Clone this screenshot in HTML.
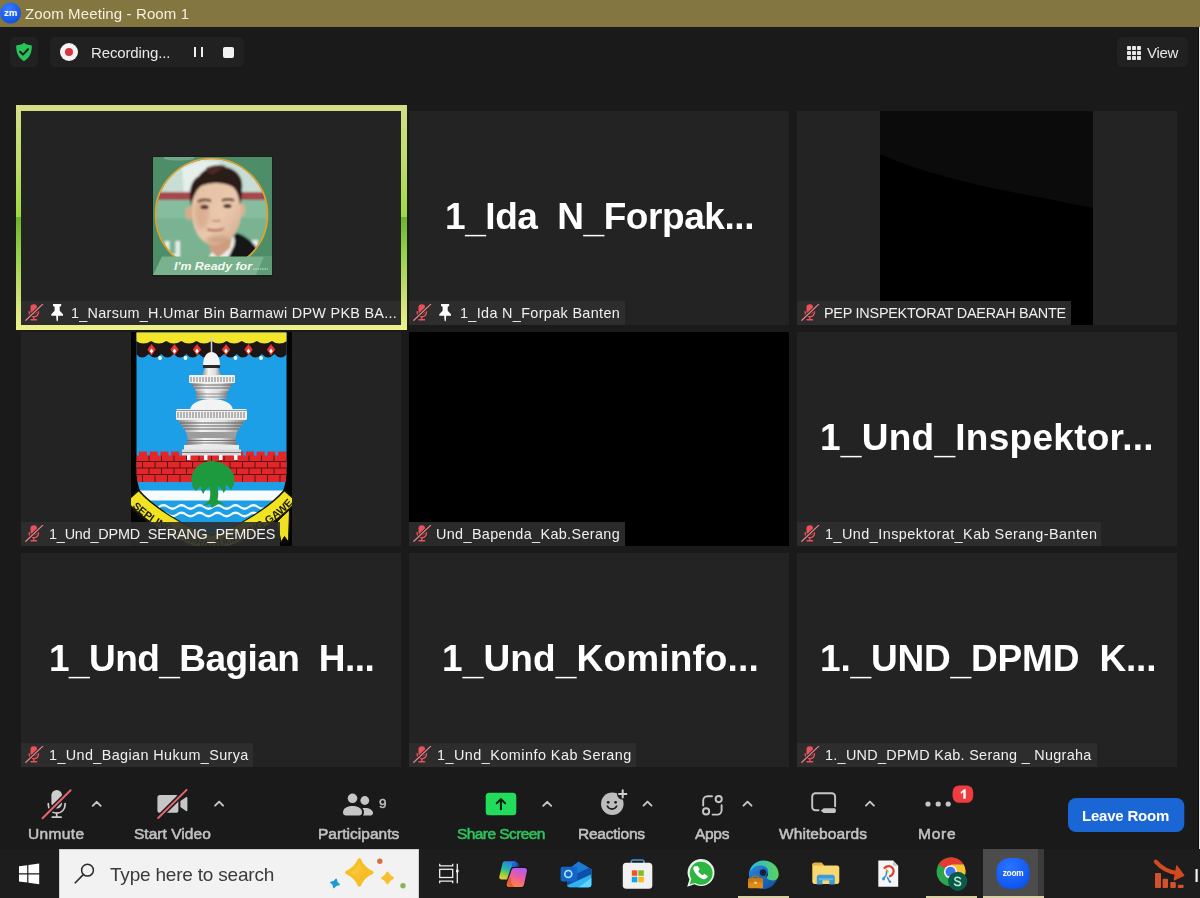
<!DOCTYPE html>
<html>
<head>
<meta charset="utf-8">
<title>Zoom Meeting - Room 1</title>
<style>
*{box-sizing:border-box;margin:0;padding:0}
html,body{width:1200px;height:898px;overflow:hidden;background:#1a1a1a}
body{position:relative;font-family:"Liberation Sans",sans-serif;color:#fff}
.abs{position:absolute}
.t{position:absolute;white-space:pre;line-height:1;will-change:transform}
#titlebar{left:0;top:0;width:1200px;height:27px;background:#837641}
.tile{position:absolute;width:380px;height:214px;background:#232323;overflow:hidden}
.big{font-weight:bold;font-size:37px;color:#fff}
.lab{position:absolute;left:0;top:189.5px;height:24.5px;background:rgba(46,46,46,.91)}
.lt{font-size:14.4px;color:#f0f0f0;top:5.5px}
.lab svg.m{position:absolute;left:3.5px;top:3.5px}
.lab svg.p{position:absolute;left:29.5px;top:3.5px}
.us{position:relative}
.big .us{top:3px}
.lt .us{top:1px}
.tb{font-size:15.5px;font-weight:normal;-webkit-text-stroke:0.55px currentColor;color:#c2c2c2;top:825.5px}
#taskbar{left:0;top:849px;width:1200px;height:49px;background:#1d1d1d}
</style>
</head>
<body>
<div id="titlebar" class="abs"></div>
<svg class="abs" style="left:0;top:2px" width="22" height="22" viewBox="0 0 22 22">
 <defs><radialGradient id="zg" cx="40%" cy="30%" r="75%"><stop offset="0" stop-color="#3b7bff"/><stop offset="1" stop-color="#0b4fe0"/></radialGradient></defs>
 <circle cx="10.5" cy="11" r="10.5" fill="url(#zg)"/>
 <text x="10.5" y="14" font-family="Liberation Sans" font-weight="bold" font-size="9.5" fill="#fff" text-anchor="middle">zm</text>
</svg>
<div class="t " id="title" style="left:25.40px;letter-spacing:0.117px;top:5.50px;font-size:15px;color:#f6f1dc">Zoom Meeting - Room 1</div>
<div class="abs" style="left:10px;top:37px;width:28px;height:30px;border-radius:6px;background:#212121"></div>
<svg class="abs" style="left:15px;top:42px" width="18" height="20" viewBox="0 0 18 20">
 <path d="M9 0.8 C11.5 2.6 14 3.2 16.8 3.4 C17 10 15 15.5 9 19.2 C3 15.5 1 10 1.2 3.4 C4 3.2 6.5 2.6 9 0.8Z" fill="#27c35b"/>
 <path d="M5.2 9.8 L8 12.6 L13 7.2" fill="none" stroke="#1a1a1a" stroke-width="2" stroke-linecap="round" stroke-linejoin="round"/>
</svg>
<div class="abs" style="left:50px;top:37px;width:194px;height:30px;border-radius:6px;background:#212121"></div>
<div class="abs" style="left:60px;top:43px;width:18px;height:18px;border-radius:50%;background:#f4f4f4"></div>
<div class="abs" style="left:65px;top:48px;width:8px;height:8px;border-radius:50%;background:#d9343f"></div>
<div class="t " id="rec" style="left:90.75px;letter-spacing:-0.138px;top:44.50px;font-size:15px;color:#e8e8e8">Recording...</div>
<div class="abs" style="left:194px;top:47px;width:2px;height:10px;background:#eee"></div>
<div class="abs" style="left:201px;top:47px;width:2px;height:10px;background:#eee"></div>
<div class="abs" style="left:223px;top:47px;width:11px;height:11px;border-radius:2px;background:#f2f2f2"></div>
<div class="abs" style="left:1117px;top:37px;width:71px;height:30px;border-radius:6px;background:#212121"></div>
<svg class="abs" style="left:1127px;top:46px" width="14" height="14" viewBox="0 0 14 14" fill="#e6e6e6">
 <rect x="0" y="0" width="4" height="4" rx=".8"/><rect x="5" y="0" width="4" height="4" rx=".8"/><rect x="10" y="0" width="4" height="4" rx=".8"/>
 <rect x="0" y="5" width="4" height="4" rx=".8"/><rect x="5" y="5" width="4" height="4" rx=".8"/><rect x="10" y="5" width="4" height="4" rx=".8"/>
 <rect x="0" y="10" width="4" height="4" rx=".8"/><rect x="5" y="10" width="4" height="4" rx=".8"/><rect x="10" y="10" width="4" height="4" rx=".8"/>
</svg>
<div class="t " id="view" style="left:1146.50px;letter-spacing:-0.300px;top:44.50px;font-size:15px;color:#e8e8e8">View</div>
<div class="abs" style="left:1199px;top:27px;width:1px;height:823px;background:#e8e8e8"></div>
<div class="abs" style="left:1198px;top:27px;width:1px;height:823px;background:#0c0c0c"></div>

<div class="abs" style="left:16px;top:105px;width:391px;height:225px;background:linear-gradient(180deg,#d4de88 0%,#bcdc66 28%,#9bdb3b 50%,#6cb42c 50%,#8fcf45 64%,#c8e070 84%,#eff18c 100%)"></div>
<div class="tile" style="left:21px;top:111px"><svg class="abs" style="left:131px;top:45px" width="121" height="121" viewBox="0 0 121 121">
 <defs>
  <clipPath id="pc"><circle cx="59.5" cy="58.5" r="55.5"/></clipPath>
  <clipPath id="pbx"><rect x="1" y="1" width="119" height="118"/></clipPath>
  <filter id="pb" x="-5%" y="-5%" width="110%" height="110%"><feGaussianBlur stdDeviation="0.9"/></filter>
  <filter id="pb3" x="-20%" y="-20%" width="140%" height="140%"><feGaussianBlur stdDeviation="2.2"/></filter>
  <linearGradient id="skin" x1="0" y1="0" x2="1" y2="1"><stop offset="0" stop-color="#e6c0a2"/><stop offset=".6" stop-color="#e9c8ad"/><stop offset="1" stop-color="#d5a98c"/></linearGradient>
 </defs>
 <rect x="0" y="0" width="121" height="121" fill="#1b1e1c"/>
 <rect x="1" y="1" width="119" height="118" fill="#4d8d68"/>
 <path d="M12 1h30v2c-10 2-22 2-30 0z" fill="#8fbfa5" opacity=".55"/>
 <g clip-path="url(#pbx)">
 <g clip-path="url(#pc)">
  <g filter="url(#pb)">
  <rect x="0" y="0" width="121" height="125" fill="#c8ddd5"/>
  <path d="M30 12l20-8 18 2-12 16-24 16z" fill="#e6efea"/>
  <rect x="0" y="36" width="121" height="8" fill="#a5474d"/>
  <rect x="0" y="44" width="121" height="80" fill="#86bd9f"/>
  <rect x="0" y="62" width="121" height="64" fill="#79b392"/>
  <path d="M13 85h4.5v13h6V85H28v22H13z" fill="#e6eee8"/>
  <path d="M100 84h6v11h-6z" fill="#e3ece6"/>
  <!-- suit & collar -->
  <path d="M38 112c4-5 9-8 15-9l12-8 20-18c10 3 19 12 24 22v20H38z" fill="#101114"/>
  <path d="M52 112c2-8 6-14 10-18l20-14c2 6 0 14-4 20l-8 12z" fill="#eeece8"/>
  <path d="M72 112c3-8 8-18 12-26l3-8c8 4 15 11 20 20l-10 14z" fill="#131418"/>
  <!-- neck -->
  <path d="M56 80h24l-2 12-12 10-8-8z" fill="#cf9e80"/>
  <!-- ears -->
  <ellipse cx="37" cy="57" rx="3.6" ry="7" fill="#d9ab8e"/>
  <ellipse cx="90" cy="54" rx="3.3" ry="6.5" fill="#dcb092"/>
  <!-- face -->
  <path d="M40 40c0-14 10-21 24-21s25 7 25 21v17c0 17-12 32-26 32S40 74 40 57z" fill="url(#skin)"/>
  <!-- hair -->
  <path d="M39 50c-3-15 0-26 8-30 5-8 15-11 26-9 12 2 19 11 17 23 0 6-1 11-2 15-1-9-3-14-7-18-9-5-23-5-32-1-5 4-8 11-10 20z" fill="#2a1a19"/>
  <path d="M54 12c6-3 14-4 20-2-4 2-8 6-12 8-5 0-8-2-8-6z" fill="#4b2a27"/>
  </g>
  <g filter="url(#pb3)">
   <ellipse cx="50" cy="58" rx="7" ry="16" fill="#c99676" opacity=".45"/>
   <ellipse cx="66" cy="84" rx="12" ry="4" fill="#b98566" opacity=".5"/>
  </g>
  <g filter="url(#pb)">
   <path d="M46 45.5c4-2 9-2 13-.5M70 44.5c4-1.5 8-1.5 12 0" stroke="#4a332c" stroke-width="2" fill="none" opacity=".85"/>
   <ellipse cx="52.5" cy="51" rx="3.8" ry="1.5" fill="#2e1f1c"/>
   <ellipse cx="75.5" cy="50" rx="3.8" ry="1.5" fill="#2e1f1c"/>
   <path d="M60 64c2 1.5 6 1.5 8.5 0" stroke="#b07a60" stroke-width="1.5" fill="none" opacity=".8"/>
   <path d="M56 73.5c4 1.5 11 1.5 15-.5" stroke="#a8625a" stroke-width="1.9" fill="none" stroke-linecap="round" opacity=".9"/>
  </g>
 </g>
 <circle cx="59.5" cy="58.5" r="56" fill="none" stroke="#dfa335" stroke-width="1.7"/>
 </g>
 <path d="M10 100.5h110l-7 18.5H1z" fill="#79b28c"/>
 <path d="M104 119l8-18.5h8V119z" fill="#5c9c77"/>
 <text x="22" y="113.5" font-family="Liberation Sans" font-weight="bold" font-style="italic" font-size="11" fill="#f4f8f4" textLength="78" lengthAdjust="spacingAndGlyphs">I'm Ready for</text>
 <path d="M101 113h15" stroke="#d4e6da" stroke-width="1" stroke-dasharray="1.5 .8"/>
</svg>
<div class="lab" style="width:380.0px"><svg class="m" width="19" height="17" viewBox="0 0 19 17"><rect x="5.5" y="0.2" width="6.6" height="10.2" rx="3.3" fill="#e9525b"/><path d="M4.1 7.6c0 3.2 2 5.1 4.7 5.1s4.7-1.9 4.7-5.1M8.8 12.7v2.6M6 15.7h5.6" fill="none" stroke="#e9525b" stroke-width="1.4" stroke-linecap="round"/><path d="M0.8 16.3L17.6 0.4" stroke="#2b2b2b" stroke-width="3.2"/><path d="M0.8 16.3L17.6 0.4" stroke="#e8868b" stroke-width="1.2" stroke-linecap="round"/></svg><svg class="p" width="13" height="18" viewBox="0 0 13 18"><path d="M2 0h8.2v1.9l-1.5 .8v4.1l3.3 3.4v1.6H7.2l-.3 4.5L6.2 17.8l-.7-1.5-.3-4.5H0.3v-1.6l3.3-3.4V2.7L2 1.9z" fill="#fff"/></svg><div class="t lt" id="l1" style="left:50.30px;letter-spacing:0.288px;">1<span class="us">_</span>Narsum<span class="us">_</span>H.Umar Bin Barmawi DPW PKB BA...</div></div></div>
<div class="tile" style="left:409px;top:111px"><div class="t big" id="b2" style="left:35.60px;letter-spacing:-0.427px;top:87.00px;">1<span class="us">_</span>Ida  N<span class="us">_</span>Forpak...</div><div class="lab" style="width:215.5px"><svg class="m" width="19" height="17" viewBox="0 0 19 17"><rect x="5.5" y="0.2" width="6.6" height="10.2" rx="3.3" fill="#e9525b"/><path d="M4.1 7.6c0 3.2 2 5.1 4.7 5.1s4.7-1.9 4.7-5.1M8.8 12.7v2.6M6 15.7h5.6" fill="none" stroke="#e9525b" stroke-width="1.4" stroke-linecap="round"/><path d="M0.8 16.3L17.6 0.4" stroke="#2b2b2b" stroke-width="3.2"/><path d="M0.8 16.3L17.6 0.4" stroke="#e8868b" stroke-width="1.2" stroke-linecap="round"/></svg><svg class="p" width="13" height="18" viewBox="0 0 13 18"><path d="M2 0h8.2v1.9l-1.5 .8v4.1l3.3 3.4v1.6H7.2l-.3 4.5L6.2 17.8l-.7-1.5-.3-4.5H0.3v-1.6l3.3-3.4V2.7L2 1.9z" fill="#fff"/></svg><div class="t lt" id="l2" style="left:50.50px;letter-spacing:0.344px;">1<span class="us">_</span>Ida N<span class="us">_</span>Forpak Banten</div></div></div>
<div class="tile" style="left:797px;top:111px"><svg class="abs" style="left:83px;top:0" width="213" height="214" viewBox="0 0 213 214"><rect width="213" height="214" fill="#000"/><path d="M0 0H213V97C140 82 60 70 0 43Z" fill="#0b0b0b"/></svg>
<div class="lab" style="width:274.0px"><svg class="m" width="19" height="17" viewBox="0 0 19 17"><rect x="5.5" y="0.2" width="6.6" height="10.2" rx="3.3" fill="#e9525b"/><path d="M4.1 7.6c0 3.2 2 5.1 4.7 5.1s4.7-1.9 4.7-5.1M8.8 12.7v2.6M6 15.7h5.6" fill="none" stroke="#e9525b" stroke-width="1.4" stroke-linecap="round"/><path d="M0.8 16.3L17.6 0.4" stroke="#2b2b2b" stroke-width="3.2"/><path d="M0.8 16.3L17.6 0.4" stroke="#e8868b" stroke-width="1.2" stroke-linecap="round"/></svg><div class="t lt" id="l3" style="left:27.00px;letter-spacing:-0.233px;">PEP INSPEKTORAT DAERAH BANTE</div></div></div>
<div class="tile" style="left:21px;top:332px"><svg class="abs" style="left:110px;top:0" width="161" height="214" viewBox="0 0 161 214">
<defs><clipPath id="sh"><path d="M5.5 0.5H155.5V138C155.5 178 120 205 80.5 226C41 205 5.5 178 5.5 138Z"/></clipPath><linearGradient id="tw" x1="0" y1="0" x2="1" y2="0"><stop offset="0" stop-color="#8d8d8d"/><stop offset=".35" stop-color="#f4f4f4"/><stop offset=".7" stop-color="#dcdcdc"/><stop offset="1" stop-color="#8a8a8a"/></linearGradient><filter id="cb" x="-2%" y="-2%" width="104%" height="104%"><feGaussianBlur stdDeviation="0.45"/></filter></defs>
<rect x="0" y="0" width="161" height="214" fill="#050505"/>
<g filter="url(#cb)">
<g clip-path="url(#sh)">
<rect x="0" y="0" width="163" height="230" fill="#1e9fe6"/>
<path d="M5 6H156V22Q149.7 29 143.4 22Q137.1 29 130.8 22Q124.5 29 118.2 22Q112 29 105.7 22Q99.4 29 93.1 22Q86.8 29 80.5 22Q74.2 29 67.9 22Q61.6 29 55.3 22Q49 29 42.8 22Q36.5 29 30.2 22Q23.9 29 17.6 22Q11.3 29 5 22Z" fill="#1a1412"/>
<path d="M5 0H156V9Q148.4 14 140.9 9Q133.3 14 125.8 9Q118.2 14 110.7 9Q103.2 14 95.6 9Q88 14 80.5 9Q73 14 65.4 9Q57.9 14 50.3 9Q42.8 14 35.2 9Q27.7 14 20.1 9Q12.6 14 5 9Z" fill="#f3e52a"/>
<path d="M20.5 12l4.2 5.5-4.2 6-4.2-6z" fill="#e8392e"/><path d="M20.5 16.5l1.8 2.5-1.8 2.5-1.8-2.5z" fill="#fff"/>
<path d="M43.5 12l4.2 5.5-4.2 6-4.2-6z" fill="#e8392e"/><path d="M43.5 16.5l1.8 2.5-1.8 2.5-1.8-2.5z" fill="#fff"/>
<path d="M66 12l4.2 5.5-4.2 6-4.2-6z" fill="#e8392e"/><path d="M66 16.5l1.8 2.5-1.8 2.5-1.8-2.5z" fill="#fff"/>
<path d="M95 12l4.2 5.5-4.2 6-4.2-6z" fill="#e8392e"/><path d="M95 16.5l1.8 2.5-1.8 2.5-1.8-2.5z" fill="#fff"/>
<path d="M117.5 12l4.2 5.5-4.2 6-4.2-6z" fill="#e8392e"/><path d="M117.5 16.5l1.8 2.5-1.8 2.5-1.8-2.5z" fill="#fff"/>
<path d="M140 12l4.2 5.5-4.2 6-4.2-6z" fill="#e8392e"/><path d="M140 16.5l1.8 2.5-1.8 2.5-1.8-2.5z" fill="#fff"/>
<circle cx="29" cy="26" r="1.9" fill="#fff"/>
<circle cx="54.5" cy="26" r="1.9" fill="#fff"/>
<circle cx="104.5" cy="26" r="1.9" fill="#fff"/>
<circle cx="130" cy="26" r="1.9" fill="#fff"/>
<rect x="0" y="123.5" width="163" height="26.5" fill="#e3262b"/>
<rect x="8" y="119.5" width="8" height="5" fill="#e3262b"/>
<rect x="18.7" y="119.5" width="8" height="5" fill="#e3262b"/>
<rect x="29.4" y="119.5" width="8" height="5" fill="#e3262b"/>
<rect x="40.1" y="119.5" width="8" height="5" fill="#e3262b"/>
<rect x="50.8" y="119.5" width="8" height="5" fill="#e3262b"/>
<rect x="61.5" y="119.5" width="8" height="5" fill="#e3262b"/>
<rect x="72.2" y="119.5" width="8" height="5" fill="#e3262b"/>
<rect x="82.9" y="119.5" width="8" height="5" fill="#e3262b"/>
<rect x="93.6" y="119.5" width="8" height="5" fill="#e3262b"/>
<rect x="104.3" y="119.5" width="8" height="5" fill="#e3262b"/>
<rect x="115" y="119.5" width="8" height="5" fill="#e3262b"/>
<rect x="125.7" y="119.5" width="8" height="5" fill="#e3262b"/>
<rect x="136.4" y="119.5" width="8" height="5" fill="#e3262b"/>
<rect x="147.1" y="119.5" width="8" height="5" fill="#e3262b"/>
<rect x="157.8" y="119.5" width="8" height="5" fill="#e3262b"/>
<path d="M0 129.5H163" stroke="#5a1414" stroke-width="1"/>
<path d="M0 136H163" stroke="#5a1414" stroke-width="1"/>
<path d="M0 142.5H163" stroke="#5a1414" stroke-width="1"/>
<path d="M5.5 123.5V129.5" stroke="#5a1414" stroke-width="1"/>
<path d="M18 123.5V129.5" stroke="#5a1414" stroke-width="1"/>
<path d="M30.5 123.5V129.5" stroke="#5a1414" stroke-width="1"/>
<path d="M43 123.5V129.5" stroke="#5a1414" stroke-width="1"/>
<path d="M55.5 123.5V129.5" stroke="#5a1414" stroke-width="1"/>
<path d="M68 123.5V129.5" stroke="#5a1414" stroke-width="1"/>
<path d="M80.5 123.5V129.5" stroke="#5a1414" stroke-width="1"/>
<path d="M93 123.5V129.5" stroke="#5a1414" stroke-width="1"/>
<path d="M105.5 123.5V129.5" stroke="#5a1414" stroke-width="1"/>
<path d="M118 123.5V129.5" stroke="#5a1414" stroke-width="1"/>
<path d="M130.5 123.5V129.5" stroke="#5a1414" stroke-width="1"/>
<path d="M143 123.5V129.5" stroke="#5a1414" stroke-width="1"/>
<path d="M155.5 123.5V129.5" stroke="#5a1414" stroke-width="1"/>
<path d="M11.5 129.5V136" stroke="#5a1414" stroke-width="1"/>
<path d="M24 129.5V136" stroke="#5a1414" stroke-width="1"/>
<path d="M36.5 129.5V136" stroke="#5a1414" stroke-width="1"/>
<path d="M49 129.5V136" stroke="#5a1414" stroke-width="1"/>
<path d="M61.5 129.5V136" stroke="#5a1414" stroke-width="1"/>
<path d="M74 129.5V136" stroke="#5a1414" stroke-width="1"/>
<path d="M86.5 129.5V136" stroke="#5a1414" stroke-width="1"/>
<path d="M99 129.5V136" stroke="#5a1414" stroke-width="1"/>
<path d="M111.5 129.5V136" stroke="#5a1414" stroke-width="1"/>
<path d="M124 129.5V136" stroke="#5a1414" stroke-width="1"/>
<path d="M136.5 129.5V136" stroke="#5a1414" stroke-width="1"/>
<path d="M149 129.5V136" stroke="#5a1414" stroke-width="1"/>
<path d="M5.5 136V142.5" stroke="#5a1414" stroke-width="1"/>
<path d="M18 136V142.5" stroke="#5a1414" stroke-width="1"/>
<path d="M30.5 136V142.5" stroke="#5a1414" stroke-width="1"/>
<path d="M43 136V142.5" stroke="#5a1414" stroke-width="1"/>
<path d="M55.5 136V142.5" stroke="#5a1414" stroke-width="1"/>
<path d="M68 136V142.5" stroke="#5a1414" stroke-width="1"/>
<path d="M80.5 136V142.5" stroke="#5a1414" stroke-width="1"/>
<path d="M93 136V142.5" stroke="#5a1414" stroke-width="1"/>
<path d="M105.5 136V142.5" stroke="#5a1414" stroke-width="1"/>
<path d="M118 136V142.5" stroke="#5a1414" stroke-width="1"/>
<path d="M130.5 136V142.5" stroke="#5a1414" stroke-width="1"/>
<path d="M143 136V142.5" stroke="#5a1414" stroke-width="1"/>
<path d="M155.5 136V142.5" stroke="#5a1414" stroke-width="1"/>
<path d="M11.5 142.5V150" stroke="#5a1414" stroke-width="1"/>
<path d="M24 142.5V150" stroke="#5a1414" stroke-width="1"/>
<path d="M36.5 142.5V150" stroke="#5a1414" stroke-width="1"/>
<path d="M49 142.5V150" stroke="#5a1414" stroke-width="1"/>
<path d="M61.5 142.5V150" stroke="#5a1414" stroke-width="1"/>
<path d="M74 142.5V150" stroke="#5a1414" stroke-width="1"/>
<path d="M86.5 142.5V150" stroke="#5a1414" stroke-width="1"/>
<path d="M99 142.5V150" stroke="#5a1414" stroke-width="1"/>
<path d="M111.5 142.5V150" stroke="#5a1414" stroke-width="1"/>
<path d="M124 142.5V150" stroke="#5a1414" stroke-width="1"/>
<path d="M136.5 142.5V150" stroke="#5a1414" stroke-width="1"/>
<path d="M149 142.5V150" stroke="#5a1414" stroke-width="1"/>
<rect x="0" y="158.5" width="163" height="10" fill="#f6fbff"/>
<path d="M10 175q4.5 -3.5 9 0q4.5 3.5 9 0q4.5 -3.5 9 0q4.5 3.5 9 0q4.5 -3.5 9 0q4.5 3.5 9 0q4.5 -3.5 9 0q4.5 3.5 9 0q4.5 -3.5 9 0q4.5 3.5 9 0q4.5 -3.5 9 0q4.5 3.5 9 0q4.5 -3.5 9 0q4.5 3.5 9 0q4.5 -3.5 9 0q4.5 3.5 9 0q4.5 -3.5 9 0" fill="none" stroke="#f6fbff" stroke-width="2.2"/>
<path d="M10 182.5q4.5 -3.5 9 0q4.5 3.5 9 0q4.5 -3.5 9 0q4.5 3.5 9 0q4.5 -3.5 9 0q4.5 3.5 9 0q4.5 -3.5 9 0q4.5 3.5 9 0q4.5 -3.5 9 0q4.5 3.5 9 0q4.5 -3.5 9 0q4.5 3.5 9 0q4.5 -3.5 9 0q4.5 3.5 9 0q4.5 -3.5 9 0q4.5 3.5 9 0q4.5 -3.5 9 0" fill="none" stroke="#f6fbff" stroke-width="2.2"/>
</g>
<path d="M80.5 6V22" stroke="#cfcfcf" stroke-width="1.6"/>
<path d="M72 34c0-9 3.5-14 8.5-14s8.5 5 8.5 14z" fill="#f4f4f4"/>
<rect x="72" y="33" width="17" height="3" fill="#2a2a2a"/>
<path d="M74 36h13l3 7H71z" fill="url(#tw)"/>
<rect x="58" y="43" width="46" height="8" rx="1" fill="#f2f2f2"/>
<path d="M60 45v5" stroke="#7a7a7a" stroke-width="1"/>
<path d="M63 45v5" stroke="#7a7a7a" stroke-width="1"/>
<path d="M66 45v5" stroke="#7a7a7a" stroke-width="1"/>
<path d="M69 45v5" stroke="#7a7a7a" stroke-width="1"/>
<path d="M72 45v5" stroke="#7a7a7a" stroke-width="1"/>
<path d="M75 45v5" stroke="#7a7a7a" stroke-width="1"/>
<path d="M78 45v5" stroke="#7a7a7a" stroke-width="1"/>
<path d="M81 45v5" stroke="#7a7a7a" stroke-width="1"/>
<path d="M84 45v5" stroke="#7a7a7a" stroke-width="1"/>
<path d="M87 45v5" stroke="#7a7a7a" stroke-width="1"/>
<path d="M90 45v5" stroke="#7a7a7a" stroke-width="1"/>
<path d="M93 45v5" stroke="#7a7a7a" stroke-width="1"/>
<path d="M96 45v5" stroke="#7a7a7a" stroke-width="1"/>
<path d="M99 45v5" stroke="#7a7a7a" stroke-width="1"/>
<path d="M102 45v5" stroke="#7a7a7a" stroke-width="1"/>
<path d="M60 51h42l-5 8H65z" fill="url(#tw)"/>
<path d="M61 53h40M63 56h36" stroke="#6a6a6a" stroke-width="1"/>
<rect x="65" y="59" width="31" height="8" fill="url(#tw)"/>
<path d="M65 62h31M65 65h31" stroke="#777" stroke-width=".8"/>
<path d="M59 78c1-7 9-11 21.5-11s20.5 4 21.5 11z" fill="#f3f3f3"/>
<rect x="45" y="77" width="71" height="11" rx="1.5" fill="#efefef"/>
<path d="M47 80v6" stroke="#777" stroke-width="1"/>
<path d="M50 80v6" stroke="#777" stroke-width="1"/>
<path d="M53 80v6" stroke="#777" stroke-width="1"/>
<path d="M56 80v6" stroke="#777" stroke-width="1"/>
<path d="M59 80v6" stroke="#777" stroke-width="1"/>
<path d="M62 80v6" stroke="#777" stroke-width="1"/>
<path d="M65 80v6" stroke="#777" stroke-width="1"/>
<path d="M68 80v6" stroke="#777" stroke-width="1"/>
<path d="M71 80v6" stroke="#777" stroke-width="1"/>
<path d="M74 80v6" stroke="#777" stroke-width="1"/>
<path d="M77 80v6" stroke="#777" stroke-width="1"/>
<path d="M80 80v6" stroke="#777" stroke-width="1"/>
<path d="M83 80v6" stroke="#777" stroke-width="1"/>
<path d="M86 80v6" stroke="#777" stroke-width="1"/>
<path d="M89 80v6" stroke="#777" stroke-width="1"/>
<path d="M92 80v6" stroke="#777" stroke-width="1"/>
<path d="M95 80v6" stroke="#777" stroke-width="1"/>
<path d="M98 80v6" stroke="#777" stroke-width="1"/>
<path d="M101 80v6" stroke="#777" stroke-width="1"/>
<path d="M104 80v6" stroke="#777" stroke-width="1"/>
<path d="M107 80v6" stroke="#777" stroke-width="1"/>
<path d="M110 80v6" stroke="#777" stroke-width="1"/>
<path d="M113 80v6" stroke="#777" stroke-width="1"/>
<path d="M45 78.5h71" stroke="#999" stroke-width="1"/>
<path d="M47 88h67l-8 12H55z" fill="url(#tw)"/>
<path d="M49 91h63M51 94h59M53 97h55" stroke="#5e5e5e" stroke-width="1.1"/>
<path d="M55 100h51l-2 7H57z" fill="#9c9c9c"/>
<rect x="56" y="106" width="49" height="7" fill="url(#tw)"/>
<path d="M56 108.5h49M56 111h49" stroke="#6a6a6a" stroke-width=".9"/>
<rect x="53" y="113" width="55" height="5" fill="#e9e9e9"/>
<rect x="51" y="117.5" width="59" height="6" fill="#d9d9d9"/>
<path d="M51 120.5h59" stroke="#777" stroke-width="1"/>
<rect x="56" y="123" width="3.5" height="5" fill="#fafafa"/>
<rect x="73" y="123" width="3.5" height="5" fill="#fafafa"/>
<rect x="88" y="123" width="3.5" height="5" fill="#fafafa"/>
<rect x="103" y="123" width="3.5" height="5" fill="#fafafa"/>
<path d="M80.5 129c13 0 23 9 23 19 0 4-2 8-4 10-1-3-3-5-5-5 1 3 0 6-2 8-1-3-3-6-6-7 1 5 1 10 0 14l8 5-7-1-7 4-1-4-8 2 7-6c1-4 1-9 0-13-3 1-5 3-6 7-2-2-3-5-2-8-3 1-4 3-5 5-3-2-5-6-5-11 0-10 8-19 20-19z" fill="#1f9a3c"/>
<path d="M146 190L158.5 177L157.5 210L153.5 204.5L150 210Z" fill="#efe023" stroke="#16140a" stroke-width="1"/>
<path d="M1 163.5C15 180 48 203 80.5 213C113 203 146 180 160 163.5" fill="none" stroke="#16140a" stroke-width="18.5"/>
<path d="M2 164.5C16 180 48 202 80.5 212C113 202 145 180 159 164.5" fill="none" stroke="#f1e224" stroke-width="15"/>
<path id="rb" d="M-1 172.5C13 188 46 208 80.5 217.5C115 208 148 188 162 171" fill="none"/>
<text font-family="Liberation Sans" font-size="10.5" font-weight="bold" fill="#1a1a10"><textPath href="#rb" startOffset="3" textLength="186" lengthAdjust="spacingAndGlyphs">SEPI ING PAMRIH RAME ING GAWE</textPath></text>
</g>
</svg><div class="lab" style="width:258.5px"><svg class="m" width="19" height="17" viewBox="0 0 19 17"><rect x="5.5" y="0.2" width="6.6" height="10.2" rx="3.3" fill="#e9525b"/><path d="M4.1 7.6c0 3.2 2 5.1 4.7 5.1s4.7-1.9 4.7-5.1M8.8 12.7v2.6M6 15.7h5.6" fill="none" stroke="#e9525b" stroke-width="1.4" stroke-linecap="round"/><path d="M0.8 16.3L17.6 0.4" stroke="#2b2b2b" stroke-width="3.2"/><path d="M0.8 16.3L17.6 0.4" stroke="#e8868b" stroke-width="1.2" stroke-linecap="round"/></svg><div class="t lt" id="l4" style="left:28.00px;letter-spacing:-0.176px;">1<span class="us">_</span>Und<span class="us">_</span>DPMD<span class="us">_</span>SERANG<span class="us">_</span>PEMDES</div></div></div>
<div class="tile" style="left:409px;top:332px;background:#000"><div class="lab" style="width:216.0px"><svg class="m" width="19" height="17" viewBox="0 0 19 17"><rect x="5.5" y="0.2" width="6.6" height="10.2" rx="3.3" fill="#e9525b"/><path d="M4.1 7.6c0 3.2 2 5.1 4.7 5.1s4.7-1.9 4.7-5.1M8.8 12.7v2.6M6 15.7h5.6" fill="none" stroke="#e9525b" stroke-width="1.4" stroke-linecap="round"/><path d="M0.8 16.3L17.6 0.4" stroke="#2b2b2b" stroke-width="3.2"/><path d="M0.8 16.3L17.6 0.4" stroke="#e8868b" stroke-width="1.2" stroke-linecap="round"/></svg><div class="t lt" id="l5" style="left:27.00px;letter-spacing:0.364px;">Und<span class="us">_</span>Bapenda<span class="us">_</span>Kab.Serang</div></div></div>
<div class="tile" style="left:797px;top:332px"><div class="t big" id="b6" style="left:23.40px;letter-spacing:0.268px;top:87.00px;">1<span class="us">_</span>Und<span class="us">_</span>Inspektor...</div><div class="lab" style="width:304.0px"><svg class="m" width="19" height="17" viewBox="0 0 19 17"><rect x="5.5" y="0.2" width="6.6" height="10.2" rx="3.3" fill="#e9525b"/><path d="M4.1 7.6c0 3.2 2 5.1 4.7 5.1s4.7-1.9 4.7-5.1M8.8 12.7v2.6M6 15.7h5.6" fill="none" stroke="#e9525b" stroke-width="1.4" stroke-linecap="round"/><path d="M0.8 16.3L17.6 0.4" stroke="#2b2b2b" stroke-width="3.2"/><path d="M0.8 16.3L17.6 0.4" stroke="#e8868b" stroke-width="1.2" stroke-linecap="round"/></svg><div class="t lt" id="l6" style="left:27.50px;letter-spacing:0.468px;">1<span class="us">_</span>Und<span class="us">_</span>Inspektorat<span class="us">_</span>Kab Serang-Banten</div></div></div>
<div class="tile" style="left:21px;top:553px"><div class="t big" id="b7" style="left:28.00px;letter-spacing:-0.558px;top:87.00px;">1<span class="us">_</span>Und<span class="us">_</span>Bagian  H...</div><div class="lab" style="width:232.0px"><svg class="m" width="19" height="17" viewBox="0 0 19 17"><rect x="5.5" y="0.2" width="6.6" height="10.2" rx="3.3" fill="#e9525b"/><path d="M4.1 7.6c0 3.2 2 5.1 4.7 5.1s4.7-1.9 4.7-5.1M8.8 12.7v2.6M6 15.7h5.6" fill="none" stroke="#e9525b" stroke-width="1.4" stroke-linecap="round"/><path d="M0.8 16.3L17.6 0.4" stroke="#2b2b2b" stroke-width="3.2"/><path d="M0.8 16.3L17.6 0.4" stroke="#e8868b" stroke-width="1.2" stroke-linecap="round"/></svg><div class="t lt" id="l7" style="left:27.50px;letter-spacing:0.387px;">1<span class="us">_</span>Und<span class="us">_</span>Bagian Hukum<span class="us">_</span>Surya</div></div></div>
<div class="tile" style="left:409px;top:553px"><div class="t big" id="b8" style="left:32.60px;letter-spacing:0.144px;top:87.00px;">1<span class="us">_</span>Und<span class="us">_</span>Kominfo...</div><div class="lab" style="width:226.7px"><svg class="m" width="19" height="17" viewBox="0 0 19 17"><rect x="5.5" y="0.2" width="6.6" height="10.2" rx="3.3" fill="#e9525b"/><path d="M4.1 7.6c0 3.2 2 5.1 4.7 5.1s4.7-1.9 4.7-5.1M8.8 12.7v2.6M6 15.7h5.6" fill="none" stroke="#e9525b" stroke-width="1.4" stroke-linecap="round"/><path d="M0.8 16.3L17.6 0.4" stroke="#2b2b2b" stroke-width="3.2"/><path d="M0.8 16.3L17.6 0.4" stroke="#e8868b" stroke-width="1.2" stroke-linecap="round"/></svg><div class="t lt" id="l8" style="left:27.50px;letter-spacing:0.474px;">1<span class="us">_</span>Und<span class="us">_</span>Kominfo Kab Serang</div></div></div>
<div class="tile" style="left:797px;top:553px"><div class="t big" id="b9" style="left:22.60px;letter-spacing:-0.172px;top:87.00px;">1.<span class="us">_</span>UND<span class="us">_</span>DPMD  K...</div><div class="lab" style="width:300.0px"><svg class="m" width="19" height="17" viewBox="0 0 19 17"><rect x="5.5" y="0.2" width="6.6" height="10.2" rx="3.3" fill="#e9525b"/><path d="M4.1 7.6c0 3.2 2 5.1 4.7 5.1s4.7-1.9 4.7-5.1M8.8 12.7v2.6M6 15.7h5.6" fill="none" stroke="#e9525b" stroke-width="1.4" stroke-linecap="round"/><path d="M0.8 16.3L17.6 0.4" stroke="#2b2b2b" stroke-width="3.2"/><path d="M0.8 16.3L17.6 0.4" stroke="#e8868b" stroke-width="1.2" stroke-linecap="round"/></svg><div class="t lt" id="l9" style="left:27.50px;letter-spacing:0.295px;">1.<span class="us">_</span>UND<span class="us">_</span>DPMD Kab. Serang <span class="us">_</span> Nugraha</div></div></div>
<svg class="abs" style="left:0;top:780px" width="1200" height="70" viewBox="0 780 1200 70">
 <g fill="#c6c6c6" stroke="none">
  <rect x="51.4" y="790" width="10.6" height="18.6" rx="5.3" fill="#cdcdcd"/>
  <path d="M48.3 803.5v1.3a8.4 8.4 0 0 0 16.8 0v-1.3" fill="none" stroke="#cdcdcd" stroke-width="1.7" stroke-linecap="round"/>
  <path d="M56.7 813v4M52.3 817.2h8.8" fill="none" stroke="#cdcdcd" stroke-width="1.7" stroke-linecap="round"/>
  <path d="M42.5 818.2L70.6 790.2" stroke="#1a1a1a" stroke-width="5"/>
  <path d="M42.5 818.2L70.6 790.2" stroke="#e8626c" stroke-width="2" stroke-linecap="round"/>
  <rect x="157.4" y="795.1" width="21" height="17.7" rx="2.6"/>
  <path d="M180.4 801.1l5.6-3.9c.7-.4 1.4-.1 1.4.7v12.4c0 .8-.7 1.1-1.4.7l-5.6-3.9z"/>
  <path d="M158.2 818L186.6 789.9" stroke="#1a1a1a" stroke-width="5"/>
  <path d="M158.2 818L186.6 789.9" stroke="#e8626c" stroke-width="2" stroke-linecap="round"/>
  <circle cx="352.5" cy="798.3" r="4.8"/>
  <path d="M343 812.3c0-4 4-6.3 9.5-6.3s9.5 2.3 9.5 6.3c0 2.2-1.2 3.2-3 3.2h-13c-1.8 0-3-1-3-3.2z"/>
  <circle cx="364.8" cy="800.5" r="4.4"/>
  <path d="M362.4 808.2c.8-.2 1.6-.3 2.5-.3 4.7 0 8.1 2 8.1 5.2 0 1.7-.9 2.4-2.4 2.4h-7.6c.7-.8 1-1.9 1-3.2 0-1.6-.6-3-1.6-4.1z"/>
  <rect x="485.7" y="792.7" width="30.6" height="22.6" rx="3.5" fill="#23dc5b"/>
  <path d="M500.9 809.3v-9.5M496.7 803.3l4.2-4.2 4.2 4.2" fill="none" stroke="#0a1a0e" stroke-width="2" stroke-linecap="round" stroke-linejoin="round"/>
  <circle cx="612.3" cy="803.8" r="11.3" fill="#bdbdbd"/>
  <circle cx="622.7" cy="793.9" r="5.7" fill="#1a1a1a"/>
  <path d="M622.7 790.2v7.4M619 793.9h7.4" stroke="#d0d0d0" stroke-width="2" stroke-linecap="round"/>
  <circle cx="608.2" cy="802.3" r="1.35" fill="#1a1a1a"/><circle cx="615.6" cy="802.3" r="1.35" fill="#1a1a1a"/>
  <path d="M607.3 806.2c1.2 2 2.8 2.9 4.7 2.9s3.5-.9 4.7-2.9" fill="none" stroke="#1a1a1a" stroke-width="1.6" stroke-linecap="round"/>
  <g fill="none" stroke="#c6c6c6" stroke-width="1.9" stroke-linecap="round">
   <path d="M703.2 805.5v-5a4.3 4.3 0 0 1 4.3-4.3h4.5"/>
   <path d="M721.6 805.3v5a4.3 4.3 0 0 1-4.3 4.3h-4.7"/>
   <circle cx="718.7" cy="799.1" r="3.1"/>
   <circle cx="706.1" cy="811.4" r="3.1"/>
  </g>
  <path d="M818.5 810.3h-3a3.3 3.3 0 0 1-3.3-3.3v-10.4a3.3 3.3 0 0 1 3.3-3.3h16.3a3.3 3.3 0 0 1 3.3 3.3v9.7" fill="none" stroke="#c6c6c6" stroke-width="1.9" stroke-linecap="round"/>
  <path d="M820.7 810.7l3-2.4h10.6c.9 0 1.5.6 1.5 1.5v1.8c0 .9-.6 1.5-1.5 1.5h-10.6z"/>
  <circle cx="928" cy="804" r="2.6"/><circle cx="938.2" cy="804" r="2.6"/><circle cx="948.2" cy="804" r="2.6"/>
  <rect x="952.6" y="785.4" width="20.6" height="17.4" rx="6.5" fill="#ee3c41"/>
  <path d="M960.8 791.9l3.2-2.7h1.7v9.6h-2.4v-6.6l-2.5 1.7z" fill="#fff"/>
  <rect x="1068" y="798" width="116.3" height="34" rx="8" fill="#1a66d4"/>
 </g>
 <g fill="none" stroke="#c8c8c8" stroke-width="1.9" stroke-linecap="round" stroke-linejoin="round">
  <path d="M92.7 805.8l4-4 4 4"/><path d="M215.1 805.6l4-4 4 4"/><path d="M543.2 805.8l4-4 4 4"/>
  <path d="M643.5 805.6l4-4 4 4"/><path d="M743.5 805.7l4-4 4 4"/><path d="M865.9 805.6l4-4 4 4"/>
 </g>
</svg>
<div class="t tb" id="u1" style="left:28.00px;letter-spacing:0.360px;">Unmute</div><div class="t tb" id="u2" style="left:134.00px;letter-spacing:0.036px;">Start Video</div><div class="t tb" id="u3" style="left:317.60px;letter-spacing:0.030px;">Participants</div><div class="t tb" id="u4" style="left:457.00px;letter-spacing:-0.573px;color:#2fc45e">Share Screen</div><div class="t tb" id="u5" style="left:578.40px;letter-spacing:-0.227px;">Reactions</div><div class="t tb" id="u6" style="left:695.40px;letter-spacing:-0.300px;">Apps</div><div class="t tb" id="u7" style="left:779.00px;letter-spacing:0.090px;">Whiteboards</div><div class="t tb" id="u8" style="left:918.40px;letter-spacing:0.780px;">More</div><div class="t " id="u9" style="left:1082.40px;letter-spacing:-0.220px;top:808.00px;font-size:15px;font-weight:bold;color:#fff">Leave Room</div><div class="t " id="n9" style="left:379.25px;letter-spacing:0.000px;top:796.50px;font-size:13.5px;-webkit-text-stroke:.4px currentColor;color:#c4c4c4">9</div>
<div id="taskbar" class="abs"></div>
<div class="abs" style="left:59px;top:849px;width:360px;height:49px;background:#f2f2f2;border:1px solid #cfcfcf;border-bottom:0"></div>
<div class="abs" style="left:983px;top:849px;width:55px;height:49px;background:#4c4c4c"></div>
<div class="abs" style="left:1038px;top:849px;width:5.5px;height:49px;background:#3b3b3b"></div>
<div class="abs" style="left:738px;top:896px;width:51px;height:2px;background:#d8cfa4"></div>
<div class="abs" style="left:925.5px;top:896px;width:51px;height:2px;background:#d8cfa4"></div>
<div class="abs" style="left:983px;top:896px;width:60.5px;height:2px;background:#d8cfa4"></div>
<div class="t " id="srch" style="left:110.00px;letter-spacing:-0.200px;top:865.00px;font-size:19px;color:#3a3a3a">Type here to search</div>
<svg class="abs" style="left:0;top:849px" width="1200" height="49" viewBox="0 849 1200 49">
 <defs>
  <linearGradient id="gy" x1="0" y1="0" x2="1" y2="1"><stop offset="0" stop-color="#ffd84a"/><stop offset="1" stop-color="#f2a91e"/></linearGradient>
  <linearGradient id="cpl" gradientUnits="userSpaceOnUse" x1="510" y1="861" x2="504" y2="880"><stop offset="0" stop-color="#2a7df0"/><stop offset=".45" stop-color="#25b9a0"/><stop offset=".75" stop-color="#9bd13c"/><stop offset="1" stop-color="#f6c83a"/></linearGradient>
  <linearGradient id="cpr" gradientUnits="userSpaceOnUse" x1="521" y1="868" x2="514" y2="887"><stop offset="0" stop-color="#b15cf0"/><stop offset=".5" stop-color="#ee5c9c"/><stop offset="1" stop-color="#fb8a3c"/></linearGradient>
  <linearGradient id="edg" x1="0" y1="0" x2="1" y2="0"><stop offset="0" stop-color="#2bb5e8"/><stop offset="1" stop-color="#58d35a"/></linearGradient>
  <linearGradient id="edb" x1="0" y1="0" x2="1" y2="1"><stop offset="0" stop-color="#2a86dc"/><stop offset="1" stop-color="#0d4fa0"/></linearGradient>
  <radialGradient id="zmg" cx="40%" cy="30%" r="80%"><stop offset="0" stop-color="#2a74ff"/><stop offset="1" stop-color="#0a50ee"/></radialGradient>
 </defs>
 <!-- windows logo -->
 <path d="M19 866.3l8.2-1.15v8.1H19zM28.4 865l10.8-1.5v9.75H28.4zM19 874.4h8.2v8.1L19 881.4zM28.4 874.4h10.8v9.8l-10.8-1.5z" fill="#fff"/>
 <!-- magnifier -->
 <circle cx="87.5" cy="870.2" r="5.9" fill="none" stroke="#2b2b2b" stroke-width="1.5"/>
 <path d="M83.3 874.6L74.8 883.2" stroke="#2b2b2b" stroke-width="1.6"/>
 <!-- sparkles -->
 <path d="M359.3 859.9Q363.1 868.7 371.9 872.5Q363.1 876.3 359.3 885.1Q355.5 876.3 346.7 872.5Q355.5 868.7 359.3 859.9Z" fill="url(#gy)" stroke="#f6c022" stroke-width="3.4" stroke-linejoin="round"/>
 <path d="M387.5 872.7Q389.1 876.4 392.8 878Q389.1 879.6 387.5 883.3Q385.9 879.6 382.2 878Q385.9 876.4 387.5 872.7Z" fill="#f7c02c" stroke="#f7c02c" stroke-width="2.2" stroke-linejoin="round"/>
 <path d="M335 879.2Q335.9 882.5 339.2 883.4Q335.9 884.3 335 887.6Q334.1 884.3 330.8 883.4Q334.1 882.5 335 879.2Z" fill="#1e9ad6" stroke="#1e9ad6" stroke-width="1.6" stroke-linejoin="round" transform="rotate(15 335 883.4)"/>
 <circle cx="379.8" cy="861.3" r="2.7" fill="#d9703c"/>
 <circle cx="403" cy="885.8" r="2.7" fill="#8db356"/>
 <!-- task view -->
 <g fill="none" stroke="#f0f0f0" stroke-width="1.3">
  <rect x="439.7" y="869.3" width="13" height="8.2"/>
  <path d="M439.7 863.8v2h13v-2M439.7 883.3v-2.2h13v2.2M457.3 863.8v19.5"/>
 </g>
 <rect x="456" y="869.7" width="2.6" height="2.6" fill="#f0f0f0"/>
 <!-- copilot -->
 <path d="M505 863.7h9.2l-4.2 13.3h-8.2z" fill="url(#cpl)" stroke="url(#cpl)" stroke-width="5" stroke-linejoin="round"/>
 <path d="M512.5 862.5l3.5-.5 2.5 1.5.3 3-1.5 5h-6.5z" fill="#1d55d6" opacity=".75"/>
 <path d="M514 870.5h10.5l-3 13.9h-12.3z" fill="#17181c" stroke="#17181c" stroke-width="7.4" stroke-linejoin="round"/>
 <path d="M514 870.5h10.5l-3 13.9h-12.3z" fill="url(#cpr)" stroke="url(#cpr)" stroke-width="5" stroke-linejoin="round"/>
 <path d="M507 882l3.5-5 1 6.5 3 3.4h-4.5c-2-.5-3.3-2.4-3-4.9z" fill="#e4522c" opacity=".8"/>
 <!-- outlook -->
 <defs><clipPath id="olc"><path d="M567 870.5l11.5-9L591.3 869v15.7c0 1.4-1.1 2.5-2.5 2.5h-19.3c-1.4 0-2.5-1.1-2.5-2.5z"/></clipPath></defs>
 <g clip-path="url(#olc)">
  <rect x="560" y="858" width="34" height="32" fill="#1b7ad6"/>
  <path d="M565 881.5l27-13v21h-27z" fill="#31b2f0"/>
  <path d="M565 879l27-12.5v7.5l-27 12.5z" fill="#0e50a8"/>
  <path d="M577 888.5l15-11v11z" fill="#5ad6ff"/>
 </g>
 <rect x="560.6" y="866.8" width="16.6" height="14.6" rx="2" fill="#1466c6"/>
 <circle cx="568.3" cy="874" r="3.5" fill="none" stroke="#b2e6ff" stroke-width="1.6"/>
 <!-- store -->
 <path d="M631.3 863.5v-1.5a2 2 0 0 1 2-2h8.7a2 2 0 0 1 2 2v1.5" fill="none" stroke="#3d9ad8" stroke-width="1.6"/>
 <rect x="622.8" y="862.8" width="29.5" height="26" rx="3.5" fill="#f1f1f1"/>
 <rect x="631.8" y="870.3" width="5.5" height="5.5" fill="#f0552a"/><rect x="638.3" y="870.3" width="5.5" height="5.5" fill="#80bb2a"/>
 <rect x="631.8" y="876.8" width="5.5" height="5.5" fill="#1aa3e8"/><rect x="638.3" y="876.8" width="5.5" height="5.5" fill="#fbb912"/>
 <!-- whatsapp -->
 <path d="M687.2 886.8l2.2-7.4a13.5 13.5 0 1 1 5 4.9z" fill="#e9f7ea"/>
 <path d="M689.8 884.3l1.5-5.2a11.5 11.5 0 1 1 3.9 3.9z" fill="#2db742"/>
 <path d="M696.3 866.3c.5-.5 1.2-.5 1.6 0l1.5 2.3c.3.5.2 1-.2 1.4l-.9.9c.9 2 2.4 3.5 4.4 4.4l.9-.9c.4-.4.9-.5 1.4-.2l2.3 1.5c.5.4.5 1.1 0 1.6l-1 1c-1 1-2.5 1.2-3.8.7-4-1.6-7.3-4.9-8.9-8.9-.5-1.3-.3-2.8.7-3.8z" fill="#fff"/>
 <!-- edge -->
 <path d="M749 876c-.6-8.5 6-15.5 14.5-15.5 9 0 15.2 6.5 15.2 13.8 0 4.5-3.4 7.5-7.3 7.5-3.2 0-5-1.7-5-3.3 0-.8.3-1.3.8-1.9.6-.8.9-1.8.9-2.8 0-3-2.5-5.2-5.8-5.2-5.2 0-9.8 3.6-13.3 7.4z" fill="url(#edg)"/>
 <path d="M749 876c0-5.5 5-10.4 11.6-10.4 4.5 0 7.5 2.6 7.5 5.8 0 1.4-.5 2.4-1.1 3.2-.4.6-.6 1-.6 1.7 0 2 2.4 4.2 6 4.2 1.7 0 3.2-.5 4.6-1.3-2.2 6-7.7 9.8-13.8 9.8C755.2 889 749 883 749 876z" fill="url(#edb)"/>
 <ellipse cx="763" cy="872.6" rx="3.3" ry="3.4" fill="#15233c"/>
 <path d="M752.3 878.5v-1.3c0-.6.5-1.1 1.1-1.1h4.2c.6 0 1.1.5 1.1 1.1v1.3" fill="none" stroke="#b86c10" stroke-width="1.2"/>
 <rect x="748" y="878.4" width="15" height="9.9" rx="1" fill="#dc8b1c"/>
 <rect x="748" y="878.4" width="15" height="4.2" rx="1" fill="#c97a14"/>
 <rect x="754.3" y="881.7" width="2.5" height="1.9" fill="#ffe08a"/>
 <!-- explorer -->
 <path d="M812.3 865c0-1.2.9-2.2 2.2-2.2h7.2l2.4 2.7h13c1.2 0 2.2 1 2.2 2.2v14c0 1.2-1 2.2-2.2 2.2h-22.6c-1.2 0-2.2-1-2.2-2.2z" fill="#f9d872"/>
 <path d="M812.3 865c0-1.2.9-2.2 2.2-2.2h7.2l2.4 2.7h-9.5c-1.3 0-2.3 1-2.3 2.2z" fill="#e7b23a"/>
 <path d="M816.8 877c0-1.3 1-2.3 2.3-2.3h13.4c1.3 0 2.3 1 2.3 2.3v7.5h-5.6v-4.3h-6.8v4.3h-5.6z" fill="#3f9bd8"/>
 <path d="M818.8 878.3h14v1.9h-14z" fill="#65b8ea"/>
 <!-- doc -->
 <path d="M878.3 860.5h14.7l5.2 5.2v21h-19.9z" fill="#f6f6f6"/>
 <path d="M893 860.5l5.2 5.2H893z" fill="#c8c8c8"/>
 <path d="M884.5 868c2.5-2.8 7-2.4 8.6.8 1.5 3-.3 6.3-3.2 7.5" fill="none" stroke="#d8412f" stroke-width="2.2" stroke-linecap="round"/>
 <path d="M886.5 871.5c.4 2.5-.8 5-2.8 6.5M887.5 877.5l2 4" fill="none" stroke="#2f8fd0" stroke-width="1.6" stroke-linecap="round"/>
 <circle cx="883.5" cy="879" r="1.4" fill="#2f8fd0"/><circle cx="890" cy="881.8" r="1.2" fill="#2f8fd0"/>
 <path d="M886 869.3l2.4 3" stroke="#f0a030" stroke-width="1.4"/>
 <!-- chrome -->
 <circle cx="951" cy="871.8" r="14.4" fill="#2da44e"/>
 <path d="M951 871.8L938.53 864.6A14.4 14.4 0 0 1 963.47 864.6z" fill="#e33b2e"/>
 <path d="M951 857.4a14.4 14.4 0 0 1 12.47 7.2H951z" fill="#e33b2e"/>
 <path d="M963.47 864.6a14.4 14.4 0 0 1-5.27 19.67L951 871.8z" fill="#f7c32e"/>
 <path d="M951 864.6h12.47a14.4 14.4 0 0 1 .3 13L951 871.8z" fill="#f7c32e"/>
 <circle cx="950.5" cy="871.8" r="6.6" fill="#f4f7fb"/>
 <circle cx="950.5" cy="871.8" r="5" fill="#3b78e7"/>
 <circle cx="957.7" cy="881.3" r="9.6" fill="#0b5a48"/>
 <path d="M960.4 878.6c-.6-.9-1.6-1.4-2.8-1.4-1.6 0-2.7.8-2.7 2 0 2.6 5.7 1.3 5.7 4.2 0 1.3-1.2 2.2-2.9 2.2-1.4 0-2.5-.6-3.1-1.6" fill="none" stroke="#bfe9d6" stroke-width="1.5" stroke-linecap="round"/>
 <!-- zoom -->
 <rect x="996.5" y="858" width="33" height="31" rx="13" fill="url(#zmg)"/>
 <text x="1013" y="876.3" font-family="Liberation Sans" font-weight="bold" font-size="8.3" fill="#fff" text-anchor="middle" letter-spacing="-.3">zoom</text>
 <!-- chart -->
 <g fill="#d4512a">
  <rect x="1155" y="873" width="6" height="15" rx="1"/><rect x="1162.6" y="878.7" width="5.4" height="9.3" rx="1"/>
  <rect x="1170.3" y="882" width="5.5" height="6" rx="1"/><rect x="1177.9" y="884.8" width="5.7" height="3.2" rx=".8"/>
 </g>
 <path d="M1155.8 861.6c6 7 13.5 10.5 21.5 11.5" fill="none" stroke="#d14a20" stroke-width="4" stroke-linecap="round"/>
 <path d="M1176.8 865.8l7 9.6-9.6 4.6z" fill="#d14a20" stroke="#d14a20" stroke-width="1.2" stroke-linejoin="round"/>
 <rect x="1195.5" y="869" width="2.2" height="13" fill="#f2f2f2"/>
</svg>

</body>
</html>
